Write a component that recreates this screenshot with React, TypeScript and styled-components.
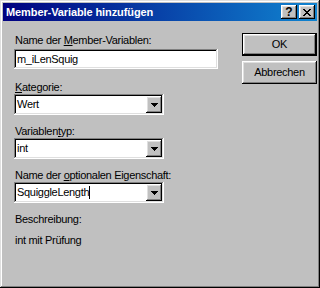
import React from "react";
import styled, { createGlobalStyle, css } from "styled-components";

const Global = createGlobalStyle`
  html, body { margin: 0; padding: 0; background: #c0c0c0; }
  body { font-family: "Liberation Sans", Arial, sans-serif; font-size: 11px; color: #000; letter-spacing: -0.3px; }
  * { box-sizing: border-box; }
`;

const raised = css`
  background: #c0c0c0;
  box-shadow: inset -1px -1px #000, inset 1px 1px #fff, inset -2px -2px #808080, inset 2px 2px #dfdfdf;
`;

const sunken = css`
  background: #fff;
  box-shadow: inset -1px -1px #fff, inset 1px 1px #808080, inset -2px -2px #dfdfdf, inset 2px 2px #000;
`;

const Window = styled.div`
  width: 320px;
  height: 288px;
  padding: 3px;
  background: #c0c0c0;
  box-shadow: inset -1px -1px #000, inset 1px 1px #dfdfdf, inset -2px -2px #808080, inset 2px 2px #fff;
  display: flex;
  flex-direction: column;
`;

const TitleBar = styled.div`
  height: 18px;
  display: flex;
  align-items: center;
  padding: 0 2px 0 3px;
  background: linear-gradient(90deg, #000080, #1084d0);
`;

const Title = styled.div`
  flex: 1;
  color: #fff;
  font-weight: bold;
  font-size: 11px;
  line-height: 13px;
  letter-spacing: -0.1px;
  white-space: nowrap;
`;

const TitleButtons = styled.div`
  display: flex;
  gap: 2px;
`;

const TitleButton = styled.div`
  ${raised};
  width: 16px;
  height: 14px;
  display: flex;
  align-items: center;
  justify-content: center;
  font-weight: bold;
  font-size: 12px;
  line-height: 11px;
  letter-spacing: 0;
  padding-top: 1px;
`;

const Body = styled.div`
  flex: 1;
  display: flex;
  padding: 0 0 0 11px;
`;

const Form = styled.div`
  width: 217px;
  display: flex;
  flex-direction: column;
  padding-top: 13px;
`;

const Field = styled.div<{ $top: number }>`
  display: flex;
  flex-direction: column;
  margin-top: ${(p) => p.$top}px;
`;

const Label = styled.div<{ $gap?: number }>`
  line-height: 13px;
  height: 13px;
  padding-left: 1px;
  white-space: nowrap;
  margin-bottom: ${(p) => p.$gap ?? 0}px;
`;

const Edit = styled.div<{ $width: number }>`
  ${sunken};
  width: ${(p) => p.$width}px;
  height: 20px;
  padding: 2px 2px 2px 3px;
  display: flex;
  align-items: center;
  line-height: 13px;
`;

const Combo = styled.div`
  ${sunken};
  width: 150px;
  height: 21px;
  padding: 2px;
  display: flex;
`;

const ComboValue = styled.div`
  flex: 1;
  display: flex;
  align-items: center;
  padding-left: 1px;
  line-height: 13px;
`;

const ArrowButton = styled.div`
  ${raised};
  width: 16px;
  display: flex;
  align-items: center;
  justify-content: center;
`;

const Caret = styled.span`
  display: inline-block;
  width: 1px;
  height: 13px;
  background: #000;
`;

const Text = styled.div`
  line-height: 13px;
  padding-left: 1px;
  margin-top: 8px;
`;

const Buttons = styled.div`
  margin-left: 14px;
  padding-top: 12px;
  display: flex;
  flex-direction: column;
  gap: 5px;
`;

const Button = styled.div<{ $default?: boolean }>`
  ${raised};
  width: 75px;
  height: 23px;
  display: flex;
  align-items: center;
  justify-content: center;
  line-height: 13px;
  ${(p) =>
    p.$default &&
    css`
      border: 1px solid #000;
    `}
`;

const Arrow = () => (
  <svg width="7" height="4" viewBox="0 0 7 4" shapeRendering="crispEdges">
    <rect x="0" y="0" width="7" height="1" fill="#000" />
    <rect x="1" y="1" width="5" height="1" fill="#000" />
    <rect x="2" y="2" width="3" height="1" fill="#000" />
    <rect x="3" y="3" width="1" height="1" fill="#000" />
  </svg>
);

const CloseGlyph = () => (
  <svg width="8" height="7" viewBox="0 0 8 7" shapeRendering="crispEdges">
    {[0, 1, 2, 3, 4, 5, 6].map((i) => (
      <React.Fragment key={i}>
        <rect x={i} y={i} width="2" height="1" fill="#000" />
        <rect x={6 - i} y={i} width="2" height="1" fill="#000" />
      </React.Fragment>
    ))}
  </svg>
);

const ComboBox = ({ children }: { children: React.ReactNode }) => (
  <Combo>
    <ComboValue>{children}</ComboValue>
    <ArrowButton>
      <Arrow />
    </ArrowButton>
  </Combo>
);

export default function App() {
  return (
    <>
      <Global />
      <Window>
        <TitleBar>
          <Title>Member-Variable hinzufügen</Title>
          <TitleButtons>
            <TitleButton>?</TitleButton>
            <TitleButton>
              <CloseGlyph />
            </TitleButton>
          </TitleButtons>
        </TitleBar>
        <Body>
          <Form>
            <Field $top={0}>
              <Label $gap={2}>
                Name der <u>M</u>ember-Variablen:
              </Label>
              <Edit $width={204}>m_iLenSquig</Edit>
            </Field>
            <Field $top={12}>
              <Label>
                <u>K</u>ategorie:
              </Label>
              <ComboBox>Wert</ComboBox>
            </Field>
            <Field $top={10}>
              <Label>
                Variablen<u>t</u>yp:
              </Label>
              <ComboBox>int</ComboBox>
            </Field>
            <Field $top={10}>
              <Label>
                Name der <u>o</u>ptionalen Eigenschaft:
              </Label>
              <ComboBox>
                SquiggleLength
                <Caret />
              </ComboBox>
            </Field>
            <Field $top={10}>
              <Label>Beschreibung:</Label>
              <Text>int mit Prüfung</Text>
            </Field>
          </Form>
          <Buttons>
            <Button $default>OK</Button>
            <Button>Abbrechen</Button>
          </Buttons>
        </Body>
      </Window>
    </>
  );
}
